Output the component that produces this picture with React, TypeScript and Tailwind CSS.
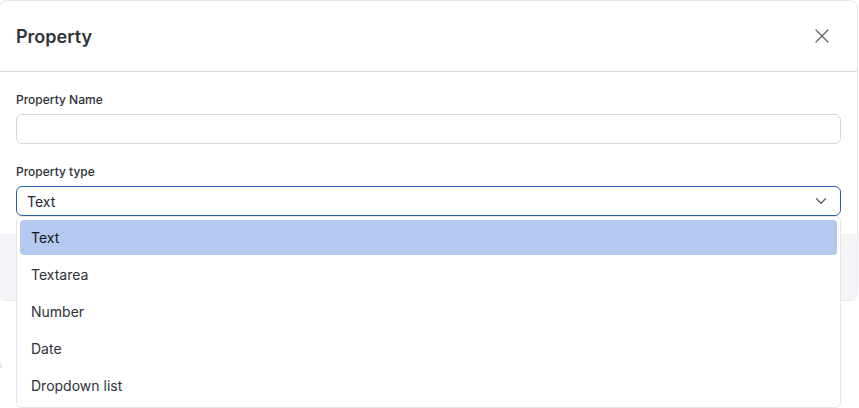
import { ChevronDown, ChevronRight, X } from "lucide-react";

const options = ["Text", "Textarea", "Number", "Date", "Dropdown list"];

export default function App() {
  return (
    <div
      className="relative w-[859px] h-[408px] overflow-hidden bg-white text-[#1f2937]"
      style={{ fontFamily: "Inter, 'Noto Sans', sans-serif" }}
    >
      {/* page behind the dialog */}
      <ChevronRight className="absolute -left-[8px] top-[358px] w-[16px] h-[16px] text-[#c4c7cc]" strokeWidth={1.3} />

      <div className="relative w-[859px] rounded-lg border border-[#e5e7eb] bg-white overflow-hidden -ml-px">
        <div className="h-[71px] flex items-center justify-between px-4 border-b border-[#d9dadd]">
          <h2 className="text-[18px] font-semibold text-[#2f343b]">Property</h2>
          <button className="w-6 h-6 flex items-center justify-center text-[#5f646b] mr-[7px]">
            <X className="w-6 h-6" strokeWidth={1.25} />
          </button>
        </div>

        <div className="px-4 pt-[20px] pb-[18px]">
          <label className="block text-[12px] leading-4 font-medium text-[#2b2f36] mb-[6px]">Property Name</label>
          <div className="h-[30px] w-[825px] rounded-md border border-[#d4d6da] bg-white" />

          <label className="block text-[12px] leading-4 font-medium text-[#2b2f36] mt-[20px] mb-[6px]">Property type</label>
          <div className="h-[30px] w-[825px] rounded-md border border-[#2c5fad] bg-white flex items-center justify-between pl-[10px] pr-[10px]">
            <span className="text-[14px] text-[#23272e]">Text</span>
            <ChevronDown className="w-[18px] h-[18px] text-[#555a62]" strokeWidth={1.6} />
          </div>
        </div>

        <div className="h-[66px] bg-[#f2f4f8]" />
      </div>

      <div className="absolute left-[16px] top-[216px] w-[825px] h-[192px] rounded-md border border-[#e3e5e8] bg-white p-[3px] flex flex-col gap-[2px]">
        {options.map((o, i) => (
          <div
            key={o}
            className={`h-[35px] flex items-center px-[11px] text-[14px] rounded-sm ${
              i === 0 ? "bg-[#b3c9ef] text-[#15181d]" : "text-[#2d3138]"
            }`}
          >
            {o}
          </div>
        ))}
      </div>
    </div>
  );
}
